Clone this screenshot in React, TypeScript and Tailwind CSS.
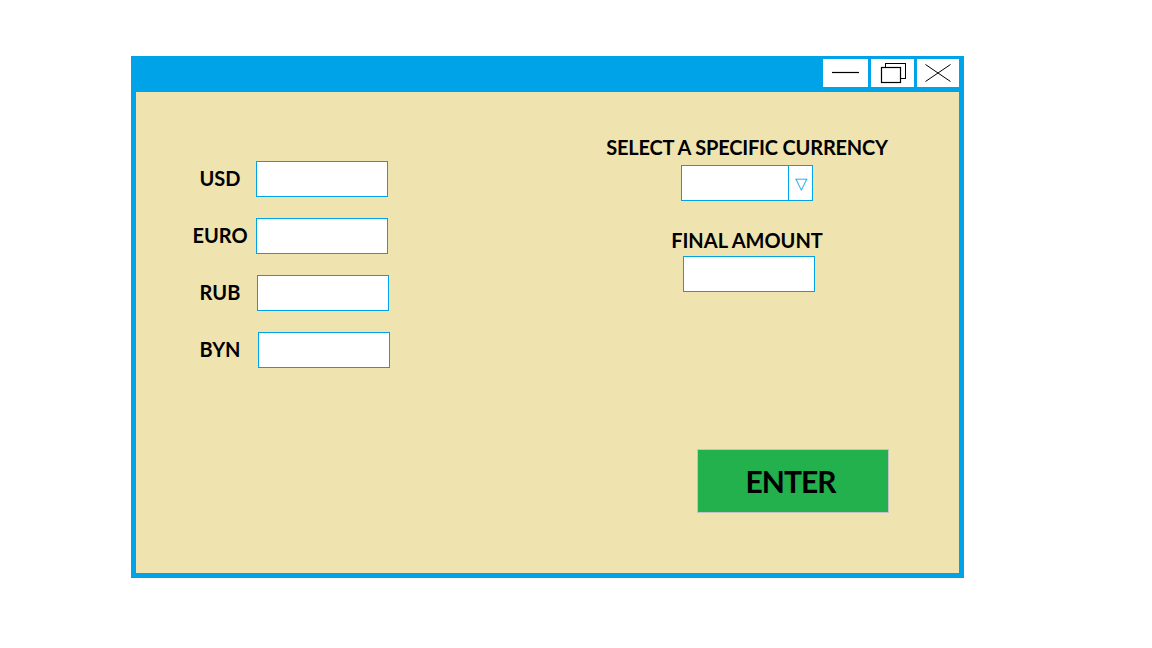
import React from 'react'

const font = { fontFamily: 'Lato, "Open Sans", sans-serif' }

const Field = ({ label, shift }: { label: string; shift: string }) => (
  <div className="flex items-center gap-[4px]">
    <span className="w-[64px] pb-[3px] text-center text-[20px] font-bold leading-6 text-black">{label}</span>
    <div className={`h-[36px] w-[132px] border border-[#00a2e8] bg-white ${shift}`} />
  </div>
)

export default function App() {
  return (
    <div className="h-[648px] w-[1152px] bg-white pl-[131px] pt-[56px]" style={font}>
      <div className="flex h-[522px] w-[833px] flex-col border-x-[5px] border-b-[5px] border-[#00a2e8] bg-[#00a2e8]">
        {/* title bar */}
        <div className="flex h-[36px] shrink-0 items-start justify-end gap-[3px] pt-[3px]">
          <button className="flex h-[28px] w-[45px] items-center justify-center bg-white">
            <svg width="28" height="4" viewBox="0 0 28 4">
              <line x1="0" y1="1.5" x2="27" y2="1.5" stroke="#000" strokeWidth="1.2" />
            </svg>
          </button>
          <button className="flex h-[28px] w-[43px] items-center justify-center bg-white">
            <svg width="26" height="22" viewBox="0 0 26 22">
              <rect x="5.5" y="1.5" width="20" height="15" fill="#fff" stroke="#000" strokeWidth="1" />
              <rect x="1.5" y="5.5" width="19" height="15" fill="#fff" stroke="#000" strokeWidth="1.2" />
            </svg>
          </button>
          <button className="flex h-[28px] w-[42px] items-center justify-center bg-white">
            <svg width="26" height="18" viewBox="0 0 26 18">
              <line x1="0.5" y1="0.5" x2="25.5" y2="17.5" stroke="#000" strokeWidth="1" />
              <line x1="25.5" y1="0.5" x2="0.5" y2="17.5" stroke="#000" strokeWidth="1" />
            </svg>
          </button>
        </div>

        {/* body */}
        <div className="flex min-h-0 flex-1 bg-[#efe4b0] pl-[52px] pt-[43px]">
          <div className="mt-[26px] flex w-[202px] flex-col gap-[21px]">
            <Field label="USD" shift="" />
            <Field label="EURO" shift="" />
            <Field label="RUB" shift="ml-px" />
            <Field label="BYN" shift="ml-[2px]" />
          </div>

          <div className="ml-[197px] flex w-[320px] flex-col items-center">
            <span className="text-[20px] font-bold leading-6 tracking-[-0.2px] text-black">
              SELECT A SPECIFIC CURRENCY
            </span>
            <div className="mt-[6px] flex h-[36px] w-[132px] border border-[#00a2e8] bg-white">
              <div className="flex-1" />
              <div className="flex w-[24px] items-center justify-center border-l border-[#00a2e8] text-[16px] leading-none text-[#00a2e8]">
                ▽
              </div>
            </div>
            <span className="mt-[27px] text-[20px] font-bold leading-6 text-black">FINAL AMOUNT</span>
            <div className="ml-[4px] mt-[4px] h-[36px] w-[132px] border border-[#00a2e8] bg-white" />
            <button className="ml-[110px] mt-[157px] flex h-[64px] w-[192px] items-center justify-center self-start border border-[#c3c3c3] bg-[#22b14c] pr-[5px] text-[30px] font-bold tracking-[-1px] text-black">
              ENTER
            </button>
          </div>
        </div>
      </div>
    </div>
  )
}
